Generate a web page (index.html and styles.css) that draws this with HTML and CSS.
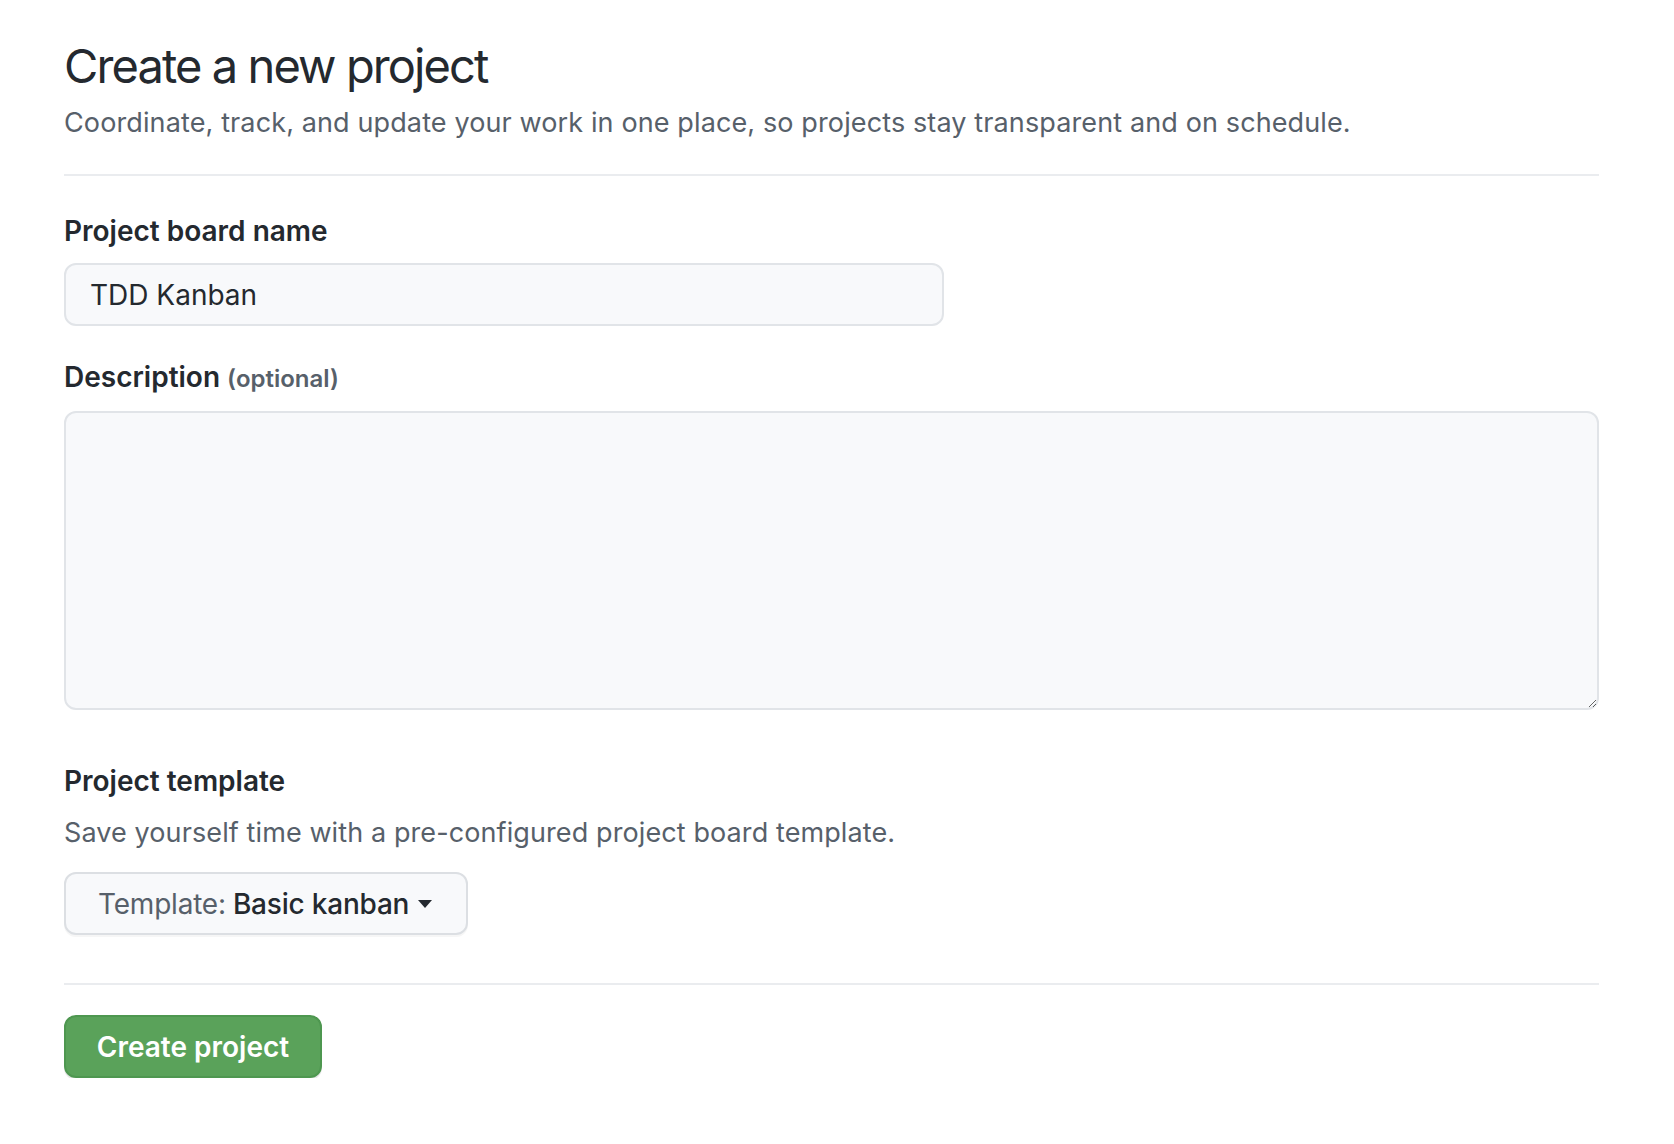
FILE: index.html
```html
<!DOCTYPE html>
<html lang="en">
<head>
    <meta charset="UTF-8">
    <meta name="viewport" content="width=device-width, initial-scale=1.0">
    <title>Create a new project</title>
    <link rel="stylesheet" href="styles.css">
</head>
<body>
    <div class="page">
        <div class="page-head">
            <h1>Create a new project</h1>
            <p class="lead">Coordinate, track, and update your work in one place, so projects stay transparent and on schedule.</p>
        </div>

        <form class="project-form">
            <div class="form-group">
                <label for="project-name">Project board name</label>
                <input type="text" id="project-name" class="form-control name-input" value="TDD Kanban">
            </div>

            <div class="form-group">
                <label for="project-body">Description <span class="note">(optional)</span></label>
                <textarea id="project-body" class="form-control body-input"></textarea>
            </div>

            <div class="form-group template-group">
                <label>Project template</label>
                <p class="hint">Save yourself time with a pre-configured project board template.</p>
                <button type="button" class="btn select-btn">
                    <span class="prefix">Template:</span>
                    <span class="value">Basic kanban</span>
                    <span class="caret"></span>
                </button>
            </div>

            <div class="form-actions">
                <button type="submit" class="btn btn-primary">Create project</button>
            </div>
        </form>
    </div>
</body>
</html>
```

FILE: styles.css
```css
body {
    margin: 0;
    font-family: Inter, "Noto Sans", sans-serif;
    color: #24292f;
    background-color: #ffffff;
}

.page {
    width: 1535px;
    padding: 34px 0 0 64px;
}

.page-head {
    padding-bottom: 31px;
    border-bottom: 2px solid #eaecef;
}

h1 {
    margin: 0;
    font-size: 47px;
    font-weight: 400;
    line-height: 64px;
    letter-spacing: -1.9px;
}

.lead {
    margin: 5px 0 0;
    font-size: 27px;
    line-height: 40px;
    letter-spacing: 0.12px;
    color: #57606a;
}

.form-group {
    margin-top: 35px;
}

.form-group + .form-group {
    margin-top: 31px;
}

label {
    display: block;
    margin-bottom: 12px;
    font-size: 28px;
    font-weight: 600;
    line-height: 40px;
}

.note {
    font-size: 24px;
    color: #57606a;
}

.form-control {
    display: block;
    box-sizing: border-box;
    border: 2px solid #e1e4e8;
    border-radius: 12px;
    background-color: #f8f9fb;
    font-family: inherit;
    font-size: 28px;
    color: #24292f;
    outline: none;
}

.name-input {
    width: 880px;
    height: 63px;
    padding: 0 24px;
}

.body-input {
    width: 1535px;
    height: 299px;
    resize: vertical;
}

.form-group + .template-group {
    margin-top: 51px;
}

.template-group label {
    margin-bottom: 12px;
}

.hint {
    margin: 0 0 19px;
    font-size: 27px;
    line-height: 40px;
    letter-spacing: 0.1px;
    color: #57606a;
}

.btn {
    display: inline-flex;
    align-items: center;
    box-sizing: border-box;
    height: 63px;
    border-radius: 12px;
    font-family: inherit;
    font-size: 28px;
    white-space: nowrap;
    cursor: pointer;
}

.select-btn {
    width: 404px;
    padding: 0 32px;
    border: 2px solid #dcdfe3;
    background-color: #f8f9fb;
    color: #24292f;
    font-weight: 500;
    gap: 7px;
    letter-spacing: -0.2px;
    box-shadow: 0 2px 0 rgba(27, 31, 35, 0.04);
}

.prefix {
    color: #57606a;
    font-weight: 400;
}

.caret {
    width: 0;
    height: 0;
    margin-left: 2px;
    border-top: 8px solid #24292f;
    border-left: 7px solid transparent;
    border-right: 7px solid transparent;
}

.form-actions {
    margin-top: 48px;
    padding-top: 30px;
    border-top: 2px solid #eaecef;
}

.btn-primary {
    width: 258px;
    padding: 0 30px;
    justify-content: center;
    border: 2px solid #4e9750;
    background-color: #5aa25a;
    color: #ffffff;
    font-weight: 600;
    box-shadow: 0 2px 0 rgba(27, 31, 35, 0.1);
}
```
